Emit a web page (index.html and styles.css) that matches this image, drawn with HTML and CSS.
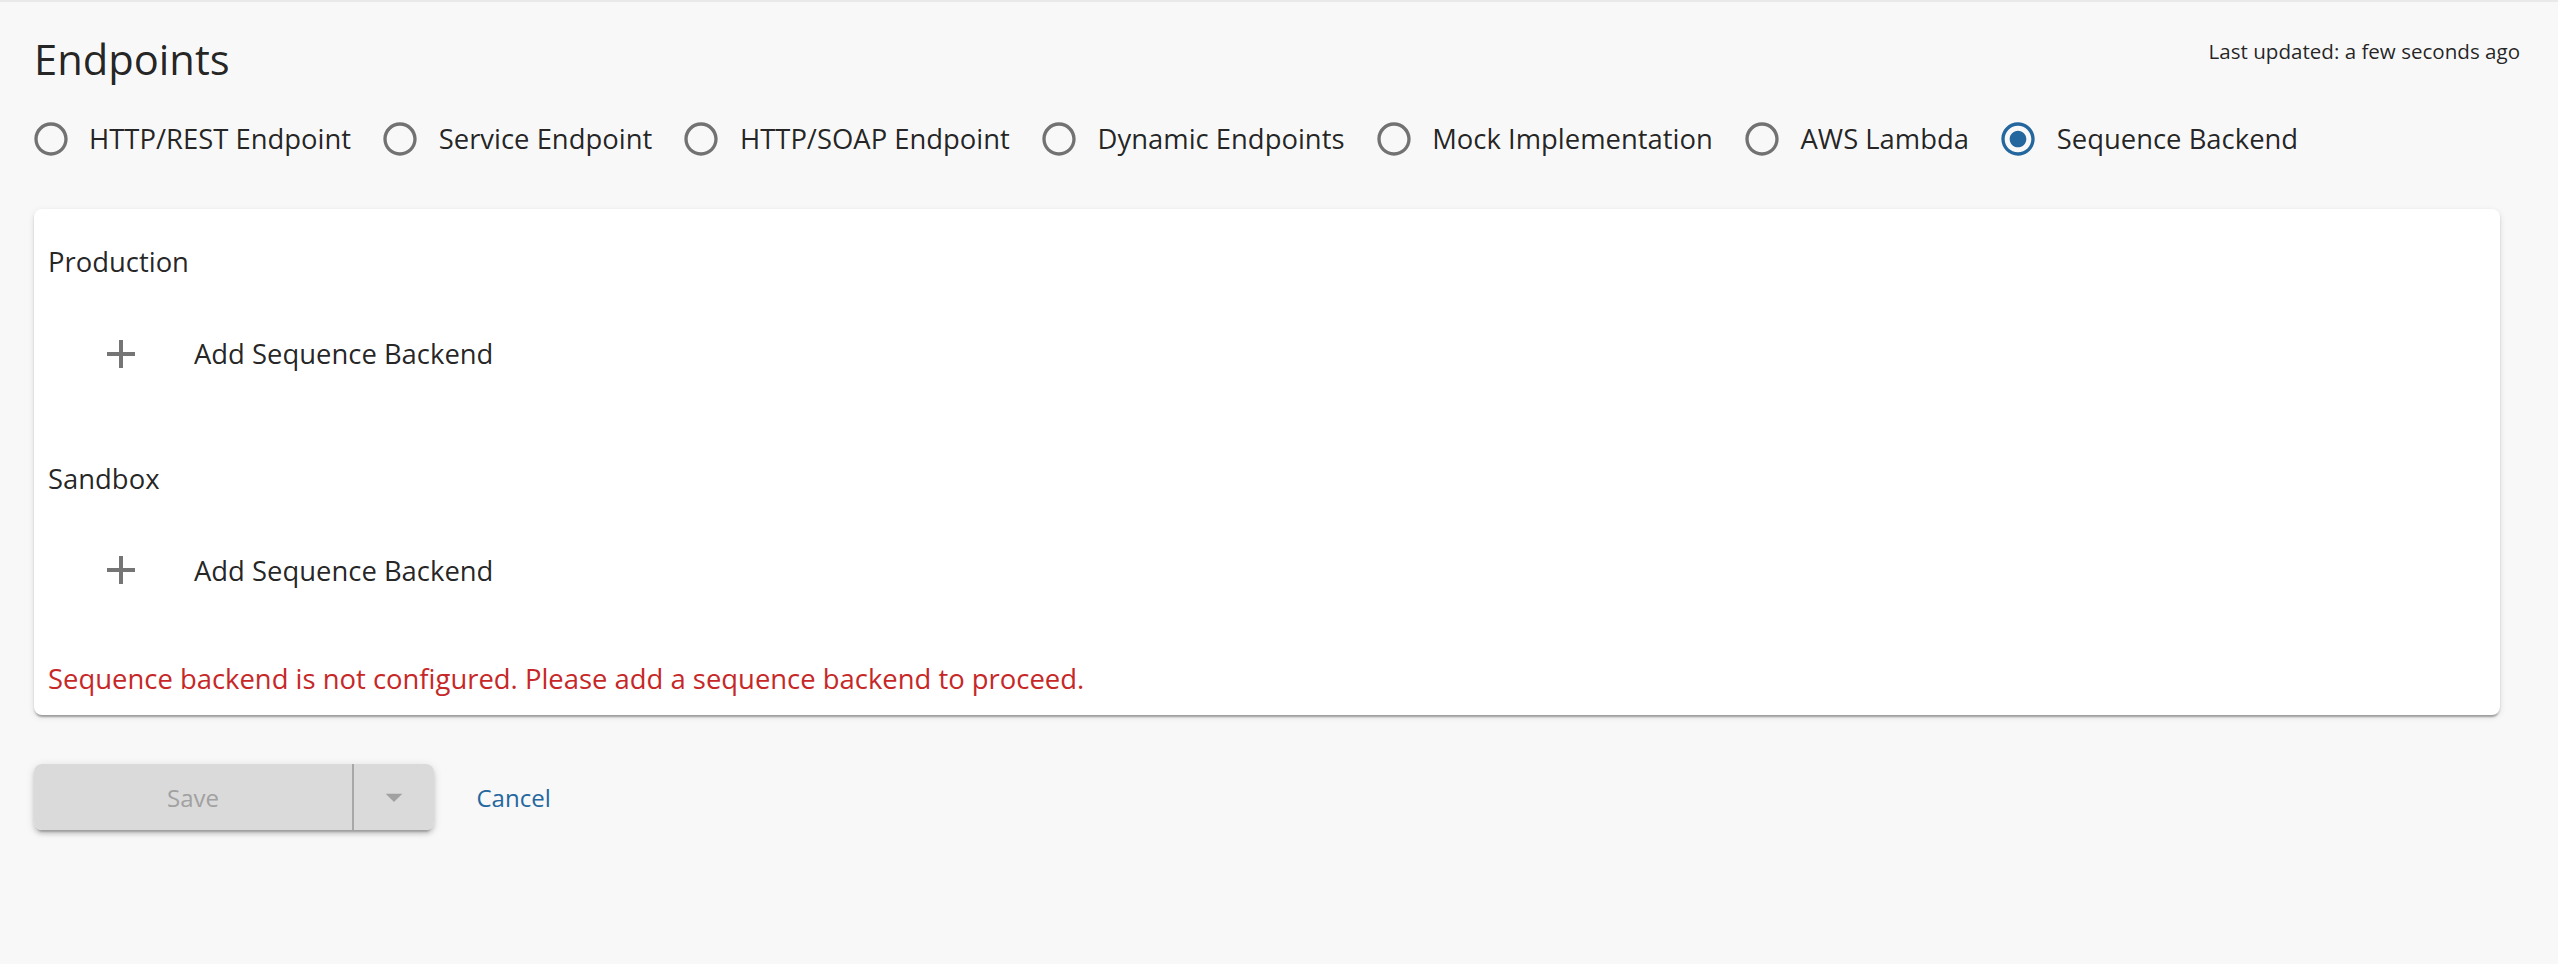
FILE: index.html
```html
<!DOCTYPE html>
<html lang="en">
<head>
<meta charset="utf-8">
<title>Endpoints</title>
<link rel="stylesheet" href="styles.css">
</head>
<body>
<div class="page">
  <header class="header">
    <h1 class="title">Endpoints</h1>
    <span class="updated">Last updated: a few seconds ago</span>
  </header>

  <div class="radio-group">
    <label class="radio-item"><span class="radio"><svg viewBox="0 0 24 24"><path d="M12 2C6.48 2 2 6.48 2 12s4.48 10 10 10 10-4.48 10-10S17.52 2 12 2zm0 18c-4.42 0-8-3.58-8-8s3.58-8 8-8 8 3.58 8 8-3.58 8-8 8z"/></svg></span><span class="radio-label">HTTP/REST Endpoint</span></label>
    <label class="radio-item"><span class="radio"><svg viewBox="0 0 24 24"><path d="M12 2C6.48 2 2 6.48 2 12s4.48 10 10 10 10-4.48 10-10S17.52 2 12 2zm0 18c-4.42 0-8-3.58-8-8s3.58-8 8-8 8 3.58 8 8-3.58 8-8 8z"/></svg></span><span class="radio-label">Service Endpoint</span></label>
    <label class="radio-item"><span class="radio"><svg viewBox="0 0 24 24"><path d="M12 2C6.48 2 2 6.48 2 12s4.48 10 10 10 10-4.48 10-10S17.52 2 12 2zm0 18c-4.42 0-8-3.58-8-8s3.58-8 8-8 8 3.58 8 8-3.58 8-8 8z"/></svg></span><span class="radio-label">HTTP/SOAP Endpoint</span></label>
    <label class="radio-item"><span class="radio"><svg viewBox="0 0 24 24"><path d="M12 2C6.48 2 2 6.48 2 12s4.48 10 10 10 10-4.48 10-10S17.52 2 12 2zm0 18c-4.42 0-8-3.58-8-8s3.58-8 8-8 8 3.58 8 8-3.58 8-8 8z"/></svg></span><span class="radio-label">Dynamic Endpoints</span></label>
    <label class="radio-item"><span class="radio"><svg viewBox="0 0 24 24"><path d="M12 2C6.48 2 2 6.48 2 12s4.48 10 10 10 10-4.48 10-10S17.52 2 12 2zm0 18c-4.42 0-8-3.58-8-8s3.58-8 8-8 8 3.58 8 8-3.58 8-8 8z"/></svg></span><span class="radio-label">Mock Implementation</span></label>
    <label class="radio-item"><span class="radio"><svg viewBox="0 0 24 24"><path d="M12 2C6.48 2 2 6.48 2 12s4.48 10 10 10 10-4.48 10-10S17.52 2 12 2zm0 18c-4.42 0-8-3.58-8-8s3.58-8 8-8 8 3.58 8 8-3.58 8-8 8z"/></svg></span><span class="radio-label">AWS Lambda</span></label>
    <label class="radio-item"><span class="radio checked"><svg viewBox="0 0 24 24"><path d="M12 7c-2.76 0-5 2.24-5 5s2.24 5 5 5 5-2.24 5-5-2.24-5-5-5zm0-5C6.48 2 2 6.48 2 12s4.48 10 10 10 10-4.48 10-10S17.52 2 12 2zm0 18c-4.42 0-8-3.58-8-8s3.58-8 8-8 8 3.58 8 8-3.58 8-8 8z"/></svg></span><span class="radio-label">Sequence Backend</span></label>
  </div>

  <section class="card">
    <div class="section">
      <h2 class="section-title">Production</h2>
      <div class="add-row">
        <span class="add-icon"><svg viewBox="0 0 24 24"><path d="M19 13h-6v6h-2v-6H5v-2h6V5h2v6h6v2z"/></svg></span>
        <span class="add-text">Add Sequence Backend</span>
      </div>
    </div>
    <div class="section">
      <h2 class="section-title">Sandbox</h2>
      <div class="add-row">
        <span class="add-icon"><svg viewBox="0 0 24 24"><path d="M19 13h-6v6h-2v-6H5v-2h6V5h2v6h6v2z"/></svg></span>
        <span class="add-text">Add Sequence Backend</span>
      </div>
    </div>
    <p class="error">Sequence backend is not configured. Please add a sequence backend to proceed.</p>
  </section>

  <div class="actions">
    <div class="btn-group">
      <button class="btn-save" disabled>Save</button>
      <button class="btn-drop" disabled><svg viewBox="0 0 24 24"><path d="M7 10l5 5 5-5z"/></svg></button>
    </div>
    <a class="cancel" href="#">Cancel</a>
  </div>
</div>
</body>
</html>
```

FILE: styles.css
```css
html, body {
  margin: 0;
  padding: 0;
}

body {
  background: #f8f8f8;
  border-top: 2px solid #e9e9e9;
  font-family: "Open Sans", "Noto Sans", sans-serif;
  color: rgba(0, 0, 0, 0.87);
  min-height: 962px;
}

.page {
  padding: 30px 38px 0 34px;
}

.header {
  display: flex;
  justify-content: space-between;
  align-items: flex-start;
}

.title {
  margin: 0;
  font-size: 41.7px;
  font-weight: 400;
  line-height: 54px;
}

.updated {
  margin-top: 5px;
  font-size: 20.57px;
  line-height: 28px;
}

.radio-group {
  display: flex;
  margin-top: 14.5px;
}

.radio-item {
  display: flex;
  align-items: center;
  margin: 0 32.7px 0 -21.5px;
}

.radio {
  display: flex;
  padding: 18px 18.5px 18px 18px;
}

.radio svg {
  width: 40px;
  height: 40px;
  fill: rgba(0, 0, 0, 0.54);
}

.radio.checked svg {
  fill: #24679f;
}

.radio-label {
  font-size: 27.43px;
  line-height: 37.4px;
}

.card {
  margin: 32.5px 20px 0 0;
  padding: 16px 16px 17.6px 14px;
  background: #fff;
  border-radius: 8px;
  box-shadow: 0 4px 2px -2px rgba(0, 0, 0, 0.2), 0 2px 2px 0 rgba(0, 0, 0, 0.14), 0 2px 6px 0 rgba(0, 0, 0, 0.12);
}

.section-title {
  margin: 18.4px 0 0;
  font-size: 27.43px;
  font-weight: 400;
  line-height: 37.4px;
}

.section + .section {
  margin-top: 82px;
}

.section + .section .section-title {
  margin-top: 0;
}

.add-row {
  display: flex;
  align-items: center;
  margin-top: 49px;
  padding-left: 49.4px;
}

.add-icon {
  display: flex;
  width: 48px;
  height: 48px;
}

.add-icon svg {
  width: 48px;
  height: 48px;
  fill: #757575;
}

.add-text {
  margin-left: 48.6px;
  font-size: 27.43px;
  line-height: 37.4px;
}

.error {
  margin: 66px 0 0;
  color: #c62828;
  font-size: 27.43px;
  line-height: 37.4px;
}

.actions {
  display: flex;
  align-items: center;
  margin-top: 49px;
}

.btn-group {
  display: flex;
  width: 400px;
  height: 66px;
  border-radius: 8px;
  box-shadow: 0 6px 2px -4px rgba(0, 0, 0, 0.2), 0 4px 4px 0 rgba(0, 0, 0, 0.14), 0 2px 10px 0 rgba(0, 0, 0, 0.12);
}

.btn-save {
  box-sizing: border-box;
  width: 320px;
  border: none;
  border-right: 2px solid #a8a8a8;
  border-radius: 8px 0 0 8px;
  background: #dadada;
  color: #a1a1a1;
  font-family: "Open Sans", "Noto Sans", sans-serif;
  font-size: 24px;
  padding: 0;
}

.btn-drop {
  display: flex;
  align-items: center;
  justify-content: center;
  width: 80px;
  border: none;
  border-radius: 0 8px 8px 0;
  background: #dadada;
  padding: 0;
}

.btn-drop svg {
  width: 40px;
  height: 40px;
  fill: #a1a1a1;
}

.cancel {
  margin-left: 42.5px;
  font-size: 24px;
  color: #24679f;
  text-decoration: none;
}
```
